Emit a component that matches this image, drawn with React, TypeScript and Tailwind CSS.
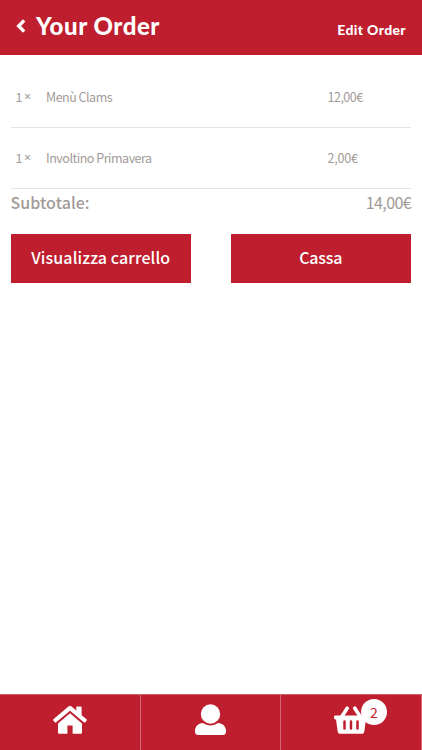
import React from 'react';

interface OrderItem {
  qty: number;
  name: string;
  price: string;
  nameClass: string;
  priceClass: string;
}

const ITEMS: OrderItem[] = [
  { qty: 1, name: 'Menù Clams', price: '12,00€', nameClass: 'tracking-[-0.5px]', priceClass: 'tracking-[-0.5px]' },
  { qty: 1, name: 'Involtino Primavera', price: '2,00€', nameClass: 'tracking-[-0.48px]', priceClass: 'tracking-[-0.2px]' },
];

const ChevronIcon = () => (
  <svg viewBox="0 0 10 14" className="h-[14px] w-[10px]" fill="none" stroke="currentColor" strokeWidth="3.4">
    <path d="M8.2 1.4 2.7 7l5.5 5.6" />
  </svg>
);

const HomeIcon = () => (
  <svg viewBox="0 0 34 28" className="h-7 w-[34px]" fill="currentColor">
    <path d="M17 7.2 5 17.4v9.1c0 .8.5 1.3 1.3 1.3h8.1v-8.4h5.2v8.4h8.1c.8 0 1.3-.5 1.3-1.3v-9.1z" />
    <path d="M15.4.5c.9-.7 2.3-.7 3.2 0l4.7 4V1.2c0-.5.3-.8.8-.8h3.7c.5 0 .8.3.8.8v8l4.7 3.9c.6.5.6 1.1.2 1.6l-1.2 1.5c-.5.5-1 .5-1.5.1L17 4.7 3.2 16.3c-.5.4-1 .4-1.5-.1L.5 14.7c-.4-.5-.4-1.1.2-1.6z" />
  </svg>
);

const UserIcon = () => (
  <svg viewBox="0 0 32 32" className="size-8" fill="currentColor">
    <circle cx="15.5" cy="10" r="9.7" />
    <path d="M8 19c4.4 3.2 10.6 3.2 15 0 4.9.3 8 3.5 8 8v.7c0 2-1.3 3.3-3.3 3.3H3.3C1.3 31 0 29.7 0 27.7V27c0-4.5 3.1-7.700 8-8z" />
  </svg>
);

const BasketIcon = () => (
  <svg viewBox="0 0 34 28" className="h-7 w-[34px]">
    <path d="m13.2 2.2-5.7 8.8M20.8 2.2l5.7 8.8" fill="none" stroke="white" strokeWidth="3.6" strokeLinecap="round" />
    <path d="M1.3 9.5h31.4c.7 0 1.2.5 1.2 1.2v1.6c0 .7-.5 1.2-1.2 1.2h-.7l-1.7 11.9c-.2 1.5-1.2 2.3-2.6 2.3H6.3c-1.4 0-2.4-.8-2.6-2.3L2 13.5h-.7c-.7 0-1.2-.5-1.2-1.2v-1.6c0-.7.5-1.2 1.2-1.2z" fill="white" />
    <path d="M10.5 15.4v7M17 15.4v7M23.5 15.4v7" fill="none" stroke="#be1e2d" strokeWidth="2.5" strokeLinecap="round" />
  </svg>
);

const App: React.FC = () => {
  return (
    <div className="flex h-[750px] w-[422px] flex-col overflow-hidden bg-white font-['Noto_Sans_CJK_SC','Noto_Sans',sans-serif] text-[#a29b98]">
      {/* Header */}
      <header className="flex h-[55px] shrink-0 justify-between bg-[#be1e2d] px-4 text-white">
        <div className="flex h-[51px] items-center gap-[10px]">
          <ChevronIcon />
          <h1 className="font-['Lato',sans-serif] text-[24px] leading-[30px] font-black tracking-[0.55px] whitespace-nowrap">Your Order</h1>
        </div>
        <button type="button" className="mt-[20px] h-5 font-['Lato',sans-serif] text-[14px] leading-5 font-black tracking-[0.35px] whitespace-nowrap">
          Edit Order
        </button>
      </header>

      {/* Order lines */}
      <main className="flex-1 pt-[12px] pr-[11px] pl-[10.5px]">
        {ITEMS.map((item) => (
          <div key={item.name} className="flex h-[61px] items-center border-b border-[#e5e4e4] text-[12.5px] whitespace-nowrap">
            <span className="flex w-[35.5px] gap-[1.5px] pl-[5px]">
              {item.qty} <span className="font-['Noto_Sans',sans-serif]">×</span>
            </span>
            <span className={`w-[281.5px] ${item.nameClass}`}>{item.name}</span>
            <span className={item.priceClass}>{item.price}</span>
          </div>
        ))}

        <div className="flex h-[27px] items-center justify-between pb-0.5 text-[16px] whitespace-nowrap">
          <span className="font-medium tracking-[0.05px]">Subtotale:</span>
          <span className="tracking-[-0.6px]">14,00€</span>
        </div>

        <div className="mt-[18px] flex justify-between text-[16px] font-medium text-white">
          <button type="button" className="h-[49px] w-[180.5px] bg-[#be1e2d] pb-1 tracking-[0.1px] whitespace-nowrap">Visualizza carrello</button>
          <button type="button" className="h-[49px] w-[180.5px] bg-[#be1e2d] pb-1 tracking-[-0.2px]">Cassa</button>
        </div>
      </main>

      {/* Bottom bar */}
      <nav className="grid h-[56px] shrink-0 grid-cols-[141px_140px_141px] border-t border-[#d0606b] bg-[#be1e2d] text-white">
        <div className="flex justify-center border-r border-[#d46873] pt-[11px]">
          <HomeIcon />
        </div>
        <div className="flex justify-center border-r border-[#d46873] pt-[9px]">
          <UserIcon />
        </div>
        <div className="flex justify-center border-r border-[#d46873] pt-[11px]">
          <div className="relative h-7 w-[34px]">
            <BasketIcon />
            <span className="absolute -top-[7px] left-[27px] flex size-[26px] items-center justify-center rounded-full bg-white text-[14px] text-[#be1e2d]">2</span>
          </div>
        </div>
      </nav>
    </div>
  );
};

export default App;
